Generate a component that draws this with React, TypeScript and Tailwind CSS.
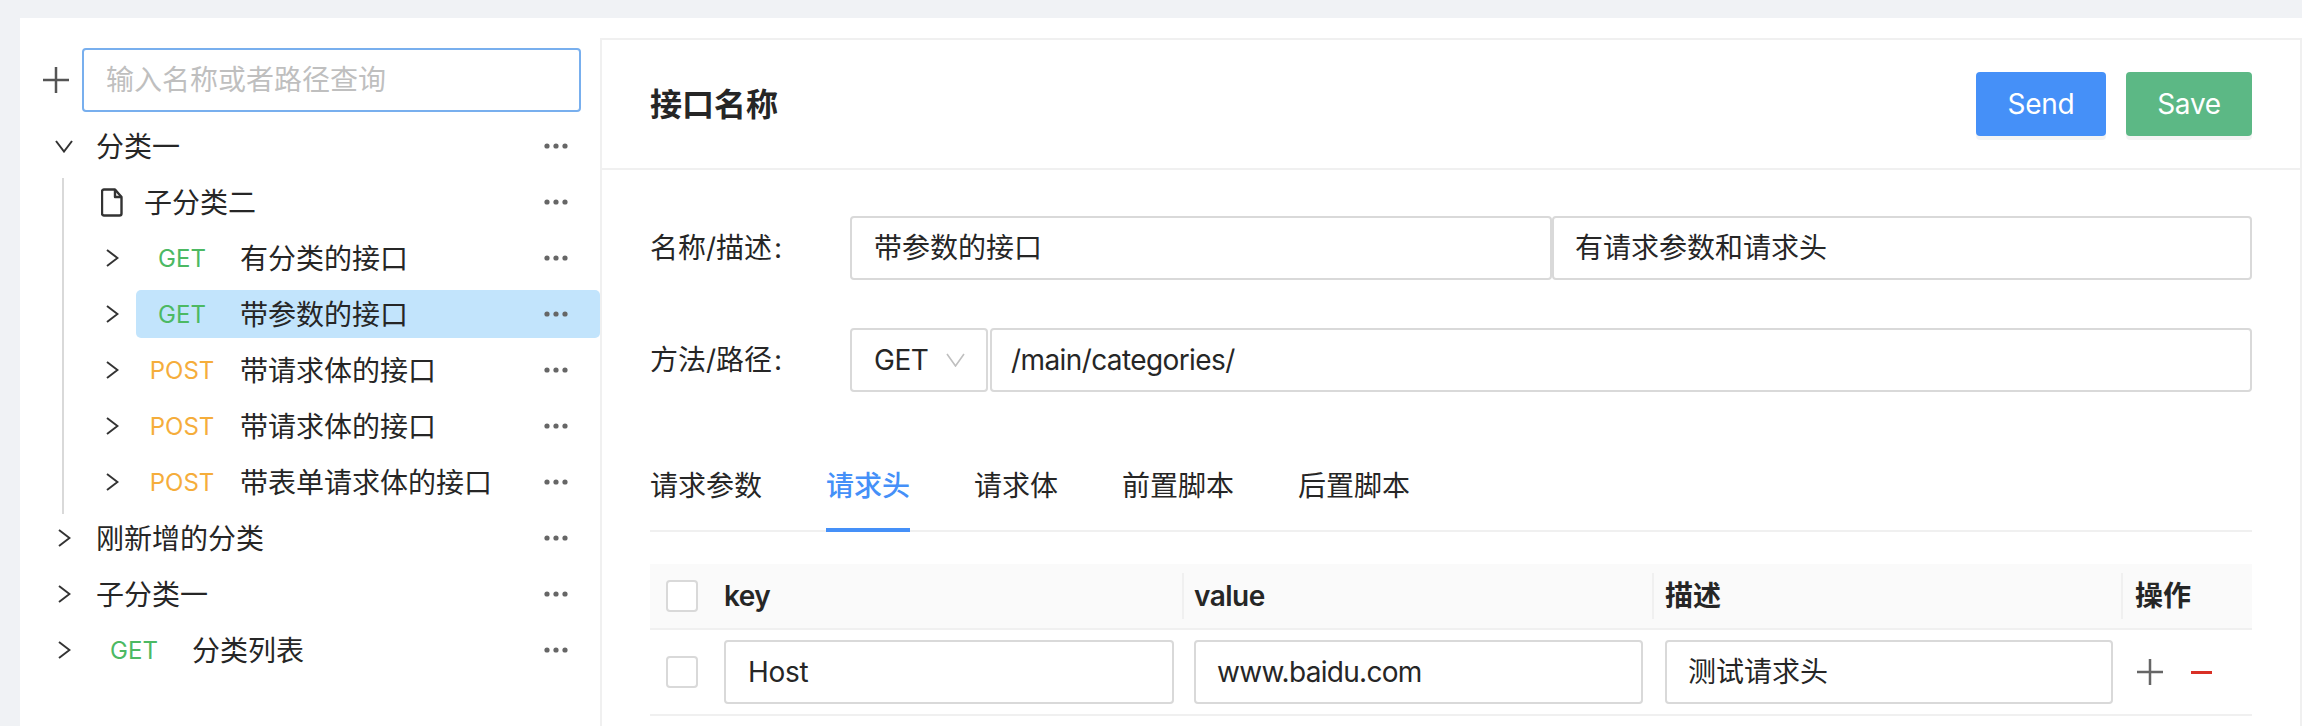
const font = 'font-["Inter","Noto_Sans_CJK_SC",sans-serif]'

type Row = { depth: number; open?: boolean; file?: boolean; method?: 'GET' | 'POST'; label: string; active?: boolean }

const childRows: Row[] = [
  { depth: 1, file: true, label: '子分类二' },
  { depth: 1, method: 'GET', label: '有分类的接口' },
  { depth: 1, method: 'GET', label: '带参数的接口', active: true },
  { depth: 1, method: 'POST', label: '带请求体的接口' },
  { depth: 1, method: 'POST', label: '带请求体的接口' },
  { depth: 1, method: 'POST', label: '带表单请求体的接口' },
]

const rootRows: Row[] = [
  { depth: 0, label: '刚新增的分类' },
  { depth: 0, label: '子分类一' },
  { depth: 0, method: 'GET', label: '分类列表' },
]

function PlusIcon({ color }: { color: string }) {
  return (
    <svg width="26" height="26" viewBox="0 0 26 26" className={`shrink-0 ${color}`} fill="none" stroke="currentColor" strokeWidth="2.5">
      <path d="M0 13h26M13 0v26" />
    </svg>
  )
}

function Dots() {
  return (
    <svg width="24" height="6" viewBox="0 0 24 6" className="shrink-0 text-[#666]" fill="currentColor">
      <circle cx="3" cy="3" r="2.6" />
      <circle cx="12" cy="3" r="2.6" />
      <circle cx="21" cy="3" r="2.6" />
    </svg>
  )
}

function FileIcon() {
  return (
    <svg width="22" height="29" viewBox="0 0 22 29" fill="none" stroke="#333" strokeWidth="2.4" strokeLinejoin="round">
      <path d="M3 1.5h11l6.5 7.5v16.5a2 2 0 0 1-2 2H3a2 2 0 0 1-2-2v-22a2 2 0 0 1 2-2z" />
      <path d="M14 1.5v7.5h6.5" />
    </svg>
  )
}

function Method({ method }: { method: 'GET' | 'POST' }) {
  return (
    <span
      className={`mr-[20px] w-[76px] shrink-0 pt-[1px] text-center text-[24px] ${method === 'GET' ? 'text-[#4cb963]' : 'text-[#f5ad3b]'}`}
    >
      {method}
    </span>
  )
}

function TreeRow({ row }: { row: Row }) {
  const nested = row.depth === 1
  return (
    <div className={`flex h-[56px] items-center ${nested ? 'pl-[68px]' : 'pl-[20px]'}`}>
      <span className="flex w-[48px] shrink-0 items-center justify-center">
        {row.file ? (
          <FileIcon />
        ) : row.open ? (
          <svg width="18" height="13" viewBox="0 0 18 13" fill="none" stroke="#333" strokeWidth="2">
            <path d="M1 1l8 10.5L17 1" />
          </svg>
        ) : (
          <svg width="13" height="18" viewBox="0 0 13 18" fill="none" stroke="#333" strokeWidth="2">
            <path d="M1 1l10.5 8L1 17" />
          </svg>
        )}
      </span>
      <div
        className={`flex h-[48px] min-w-0 flex-1 items-center rounded-[5px] pl-[8px] pr-[32px] ${row.active ? 'bg-[#c2e4fc]' : ''}`}
      >
        {row.method && <Method method={row.method} />}
        <span className="flex-1 pt-[1px] text-[28px] text-[#262626]">{row.label}</span>
        <Dots />
      </div>
    </div>
  )
}

function Box({ value, className }: { value: string; className: string }) {
  return (
    <div
      className={`flex items-center rounded-[4px] border-2 border-[#d9d9d9] bg-white text-[28px] text-[#262626] ${className}`}
    >
      {value}
    </div>
  )
}

function Check() {
  return <span className="h-[32px] w-[32px] rounded-[4px] border-2 border-[#d9d9d9] bg-white" />
}

function Label({ text }: { text: string }) {
  return (
    <span className="w-[200px] shrink-0 text-[28px] text-[#262626]">
      {text}
      <span className="ml-[2px]">:</span>
    </span>
  )
}

export default function App() {
  return (
    <div className={`${font} h-[726px] w-[2302px] overflow-hidden bg-[#f0f2f5] pl-[20px] pt-[18px]`}>
      <div className="flex h-[708px] bg-white">
        <aside className="w-[580px] shrink-0 pt-[30px]">
          <div className="flex items-center pl-[23px]">
            <span className="mr-[13px]">
              <PlusIcon color="text-[#555]" />
            </span>
            <div className="flex h-[64px] w-[499px] items-center rounded-[4px] border-2 border-[#78afee] px-[22px] text-[28px] text-[#bfbfbf]">
              输入名称或者路径查询
            </div>
          </div>
          <div className="mt-[6px]">
            <TreeRow row={{ depth: 0, open: true, label: '分类一' }} />
            <div className="relative">
              <span className="absolute -bottom-[4px] left-[42px] top-[4px] w-[2px] bg-[#d9d9d9]" />
              {childRows.map((row, i) => (
                <TreeRow key={i} row={row} />
              ))}
            </div>
            {rootRows.map((row, i) => (
              <TreeRow key={i} row={row} />
            ))}
          </div>
        </aside>
        <main className="mt-[20px] flex-1 border-x-2 border-t-2 border-[#f0f0f0] pr-[48px]">
          <div className="-mr-[48px] flex h-[130px] items-center justify-between border-b-2 border-[#f0f0f0] pl-[48px] pr-[48px]">
            <h1 className="pt-[2px] text-[32px] font-semibold text-[#262626]">接口名称</h1>
            <div className="flex gap-[20px]">
              <button className="h-[64px] w-[130px] rounded-[4px] bg-[#4590f8] text-[28px] tracking-[-0.3px] text-white shadow-[0_4px_0_rgba(0,0,0,0.045)]">
                Send
              </button>
              <button className="h-[64px] w-[126px] rounded-[4px] bg-[#5cb885] text-[28px] tracking-[-0.3px] text-white shadow-[0_4px_0_rgba(0,0,0,0.045)]">
                Save
              </button>
            </div>
          </div>
          <div className="pl-[48px]">
            <div className="mt-[46px] flex items-center">
              <Label text="名称/描述" />
              <Box value="带参数的接口" className="h-[64px] w-[702px] px-[22px]" />
              <Box value="有请求参数和请求头" className="h-[64px] flex-1 px-[21px]" />
            </div>
            <div className="mt-[48px] flex items-center">
              <Label text="方法/路径" />
              <div className="mr-[2px] flex h-[64px] w-[138px] items-center justify-between rounded-[4px] border-2 border-[#d9d9d9] pl-[22px] pr-[21px] text-[28px] tracking-[-0.5px] text-[#262626]">
                GET
                <svg width="19" height="14" viewBox="0 0 19 14" fill="none" stroke="#bfbfbf" strokeWidth="1.6">
                  <path d="M1 1l8.5 12L18 1" />
                </svg>
              </div>
              <Box value="/main/categories/" className="h-[64px] flex-1 px-[19px] tracking-[-0.6px]" />
            </div>
            <div className="mt-[42px] flex h-[98px] gap-[64px] border-b-2 border-[#f0f0f0]">
              {['请求参数', '请求头', '请求体', '前置脚本', '后置脚本'].map((tab, i) => (
                <span
                  key={tab}
                  className={`flex h-[98px] items-center text-[28px] ${
                    i === 1 ? 'border-b-4 border-[#4590f8] pt-[10px] font-medium text-[#4590f8]' : 'pt-[6px] text-[#262626]'
                  }`}
                >
                  {tab}
                </span>
              ))}
            </div>
            <div className="mt-[32px] grid grid-cols-[58px_476px_470px_469px_129px] items-center border-b-2 border-[#f0f0f0] bg-[#fafafa]">
              <div className="flex h-[64px] items-center pl-[16px]">
                <Check />
              </div>
              <div className="flex h-[46px] items-center border-r-2 border-[#f0f0f0] pl-[16px] text-[28px] font-semibold tracking-[-0.5px] text-[#262626]">
                key
              </div>
              <div className="flex h-[46px] items-center border-r-2 border-[#f0f0f0] pl-[10px] text-[28px] font-semibold tracking-[-0.5px] text-[#262626]">
                value
              </div>
              <div className="flex h-[46px] items-center border-r-2 border-[#f0f0f0] pl-[11px] text-[28px] font-semibold text-[#262626]">
                描述
              </div>
              <div className="flex h-[46px] items-center pl-[12px] text-[28px] font-semibold text-[#262626]">操作</div>
            </div>
            <div className="grid h-[86px] grid-cols-[58px_476px_470px_469px_129px] items-center border-b-2 border-[#f0f0f0]">
              <div className="flex items-center pl-[16px]">
                <Check />
              </div>
              <div className="pl-[16px] pr-[10px]">
                <Box value="Host" className="h-[64px] px-[22px] tracking-[-0.3px]" />
              </div>
              <div className="pl-[10px] pr-[11px]">
                <Box value="www.baidu.com" className="h-[64px] px-[21px] tracking-[-0.7px]" />
              </div>
              <div className="pl-[11px] pr-[10px]">
                <Box value="测试请求头" className="h-[64px] px-[21px]" />
              </div>
              <div className="flex items-center gap-[28px] pl-[14px]">
                <PlusIcon color="text-[#666]" />
                <svg width="21" height="3" viewBox="0 0 21 3" className="text-[#d93026]" fill="currentColor">
                  <rect width="21" height="3" />
                </svg>
              </div>
            </div>
          </div>
        </main>
      </div>
    </div>
  )
}
